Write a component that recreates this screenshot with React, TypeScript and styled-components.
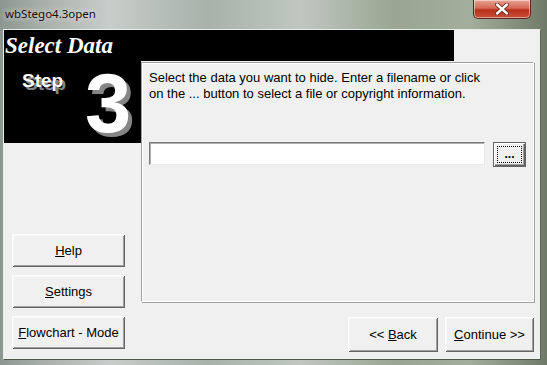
import React from "react";
import styled, { createGlobalStyle } from "styled-components";

const Global = createGlobalStyle`
  html, body { margin: 0; padding: 0; width: 547px; height: 365px; overflow: hidden; }
  body { font-family: "Liberation Sans", Arial, sans-serif; }
`;

const Window = styled.div`
  width: 547px;
  height: 365px;
  box-sizing: border-box;
  display: flex;
  flex-direction: column;
  background: linear-gradient(90deg, #8d9791 0%, #a9b0ab 8%, #c7cdca 20%, #a8b1aa 38%, #c0c7c1 55%, #9aa693 72%, #a2ad9c 86%, #6f7a66 100%);
  padding: 0 6px 5px 3px;
`;

const TitleBar = styled.div`
  height: 29px;
  display: flex;
  align-items: flex-start;
  position: relative;
  flex-shrink: 0;
`;

const Title = styled.span`
  font-family: "Noto Sans", "DejaVu Sans", sans-serif;
  font-size: 11.5px;
  color: #111;
  margin: 6px 0 0 2px;
  text-shadow: 0 0 6px rgba(255,255,255,0.9);
`;

const CloseButton = styled.div`
  position: absolute;
  left: 470px;
  top: 0;
  width: 58px;
  height: 19px;
  box-sizing: border-box;
  border: 1px solid #5a2a22;
  border-top: none;
  border-radius: 0 0 5px 5px;
  background: linear-gradient(180deg, #e8a293 0%, #d46a55 45%, #b8301c 55%, #c9503a 100%);
  box-shadow: inset 0 0 0 1px rgba(255,255,255,0.45);
  display: flex;
  align-items: center;
  justify-content: center;
`;

const Client = styled.div`
  flex: 1;
  background: #f0f0f0;
  border: 1px solid #e8ecea;
  border-right-color: #5d6658;
  border-bottom-color: #4d5648;
  display: grid;
  grid-template-columns: 137px 1fr;
  grid-template-rows: 31px 1fr;
  min-height: 0;
`;

const HeaderRow = styled.div`
  grid-column: 1 / 3;
  display: flex;
`;

const HeaderBar = styled.div`
  width: 450px;
  background: #000;
  color: #fff;
  font-family: "Liberation Serif", "Times New Roman", serif;
  font-weight: bold;
  font-style: italic;
  font-size: 23px;
  line-height: 31px;
  padding-left: 1px;
  box-sizing: border-box;
`;

const LeftCol = styled.div`
  display: flex;
  flex-direction: column;
  padding-bottom: 10px;
`;

const StepPanel = styled.div`
  height: 82px;
  background: #000;
  position: relative;
  flex-shrink: 0;
`;

const ShadowText = styled.span<{ $size: number; $x: number; $y: number; $off: number }>`
  position: absolute;
  left: ${(p) => p.$x}px;
  top: ${(p) => p.$y}px;
  font-family: "Liberation Sans", Arial, sans-serif;
  font-weight: bold;
  font-size: ${(p) => p.$size}px;
  line-height: 1;
  color: #fff;
  text-shadow: ${(p) => p.$off}px ${(p) => p.$off}px 0 #858585;
`;

const Spacer = styled.div`
  flex: 1;
`;

const LeftButtons = styled.div`
  display: flex;
  flex-direction: column;
  gap: 8px;
  padding-left: 8px;
`;

const Button = styled.button<{ $w: number; $h: number }>`
  width: ${(p) => p.$w}px;
  height: ${(p) => p.$h}px;
  background: #f0f0f0;
  border: none;
  padding: 0;
  font-family: "Liberation Sans", Arial, sans-serif;
  font-size: 13px;
  color: #000;
  box-shadow: inset 1px 1px 0 #ffffff, inset -1px -1px 0 #646464, inset 2px 2px 0 #f8f8f8, inset -2px -2px 0 #a0a0a0;
  display: flex;
  align-items: center;
  justify-content: center;
`;

const Label = styled.span`
  white-space: pre;
`;

const U = styled.span`
  text-decoration: underline;
`;

const RightCol = styled.div`
  display: flex;
  flex-direction: column;
  padding: 1px 7px 0 0;
`;

const Panel = styled.div`
  height: 240px;
  box-sizing: border-box;
  border: 1px solid #a0a0a0;
  border-right-color: #ffffff;
  border-bottom-color: #ffffff;
  box-shadow: inset 1px 1px 0 #ffffff, 1px 1px 0 #a0a0a0;
  padding: 7px 7px 0 7px;
  display: flex;
  flex-direction: column;
`;

const Instruction = styled.p`
  margin: 0;
  font-size: 13px;
  line-height: 16px;
  color: #000;
`;

const FileRow = styled.div`
  display: flex;
  gap: 8px;
  margin-top: 40px;
  align-items: flex-start;
`;

const FileInput = styled.div`
  width: 336px;
  height: 23px;
  box-sizing: border-box;
  background: #fff;
  border: 1px solid #7a7a7a;
  border-right-color: #e8e8e8;
  border-bottom-color: #e8e8e8;
  box-shadow: inset 1px 1px 0 #b0b0b0;
`;

const BrowseButton = styled.div`
  width: 33px;
  height: 25px;
  box-sizing: border-box;
  background: #f0f0f0;
  border: 1px solid #646464;
  box-shadow: inset 1px 1px 0 #ffffff, inset -1px -1px 0 #646464, inset -2px -2px 0 #a0a0a0;
  display: flex;
  align-items: center;
  justify-content: center;
  padding: 3px;
`;

const FocusRect = styled.div`
  width: 100%;
  height: 100%;
  box-sizing: border-box;
  border: 1px dotted #000;
  display: flex;
  align-items: flex-end;
  justify-content: center;
  font-size: 12px;
  font-weight: bold;
  line-height: 12px;
  padding-bottom: 2px;
`;

const Footer = styled.div`
  display: flex;
  justify-content: flex-end;
  gap: 7px;
  margin-top: 15px;
`;

export default function App() {
  return (
    <>
      <Global />
      <Window>
        <TitleBar>
          <Title>wbStego4.3open</Title>
          <CloseButton>
            <svg width="14" height="12" viewBox="0 0 14 12">
              <path d="M2 1.5 L12 10.5 M12 1.5 L2 10.5" stroke="#5a2018" strokeWidth="4" strokeLinecap="round" />
              <path d="M2 1.5 L12 10.5 M12 1.5 L2 10.5" stroke="#ffffff" strokeWidth="2.4" strokeLinecap="round" />
            </svg>
          </CloseButton>
        </TitleBar>
        <Client>
          <HeaderRow>
            <HeaderBar>Select Data</HeaderBar>
          </HeaderRow>
          <LeftCol>
            <StepPanel>
              <ShadowText $size={19} $x={18} $y={10} $off={3}>Step</ShadowText>
              <ShadowText $size={83} $x={81} $y={1} $off={4}>3</ShadowText>
            </StepPanel>
            <Spacer />
            <LeftButtons>
              <Button $w={113} $h={33}><Label><U>H</U>elp</Label></Button>
              <Button $w={113} $h={33}><Label><U>S</U>ettings</Label></Button>
              <Button $w={113} $h={33}><Label><U>F</U>lowchart - Mode</Label></Button>
            </LeftButtons>
          </LeftCol>
          <RightCol>
            <Panel>
              <Instruction>
                Select the data you want to hide. Enter a filename or click
                <br />
                on the ... button to select a file or copyright information.
              </Instruction>
              <FileRow>
                <FileInput />
                <BrowseButton>
                  <FocusRect>...</FocusRect>
                </BrowseButton>
              </FileRow>
            </Panel>
            <Footer>
              <Button $w={90} $h={35}><Label>{"<< "}<U>B</U>ack</Label></Button>
              <Button $w={89} $h={35}><Label><U>C</U>{"ontinue >>"}</Label></Button>
            </Footer>
          </RightCol>
        </Client>
      </Window>
    </>
  );
}
